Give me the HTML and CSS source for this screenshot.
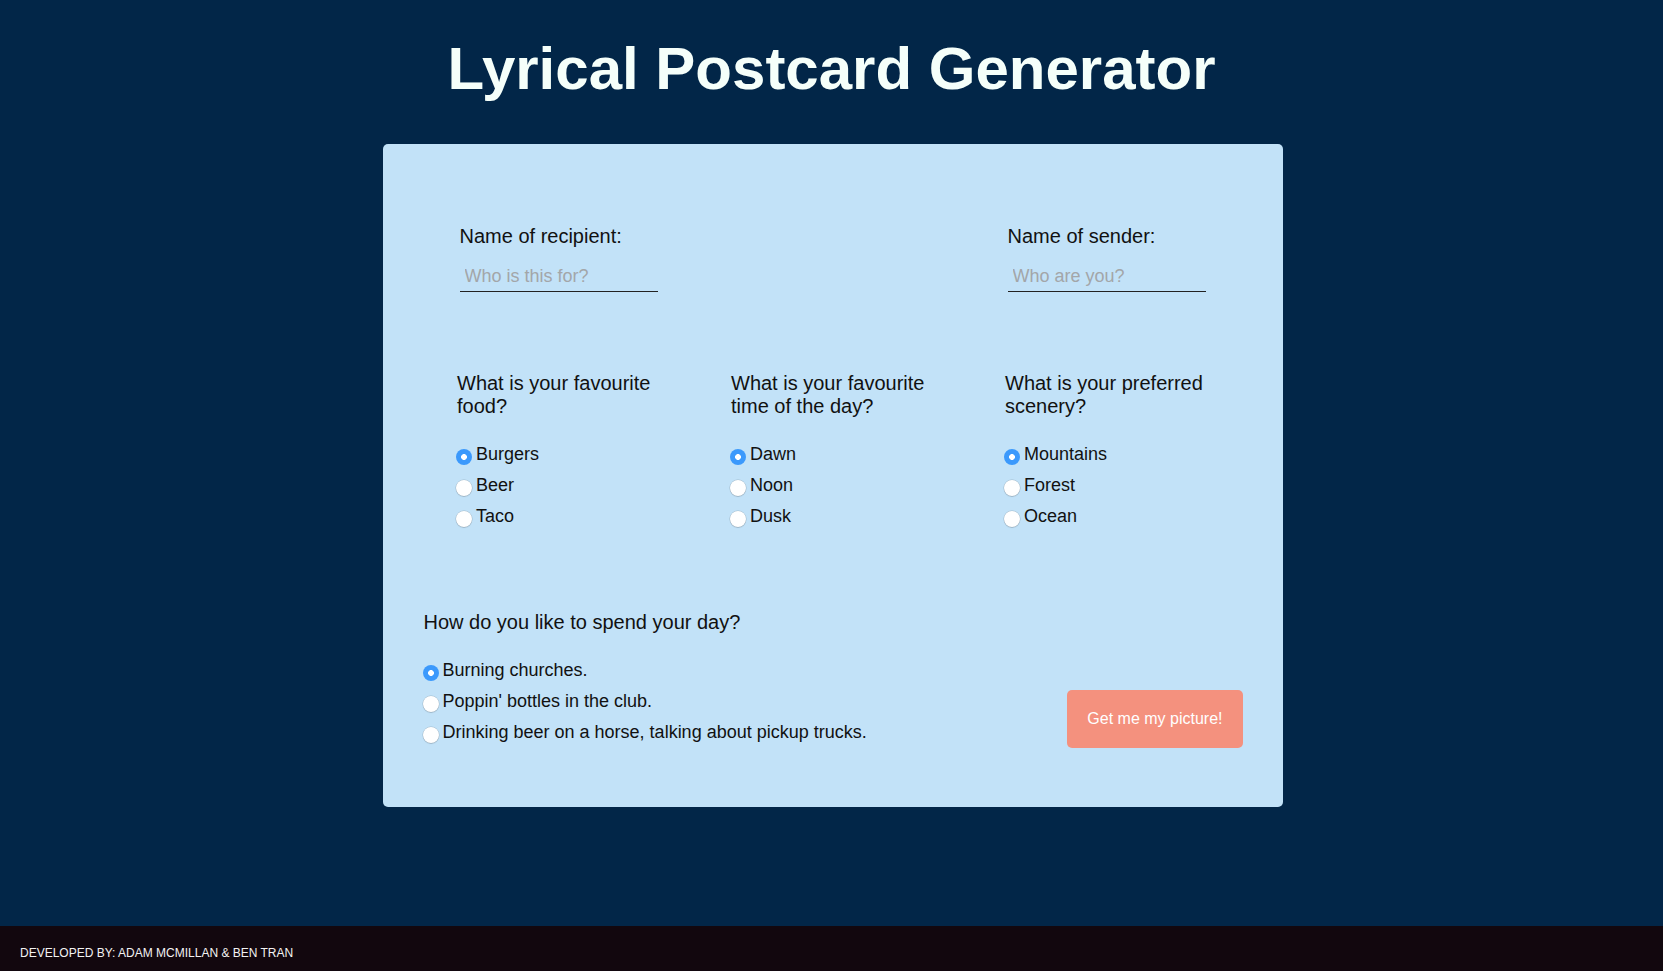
FILE: index.html
```html
<!DOCTYPE html>
<html lang="en">
<head>
<meta charset="utf-8">
<title>Lyrical Postcard Generator</title>
<link rel="stylesheet" href="styles.css">
</head>
<body>
<main class="main">
  <h1 class="title">Lyrical Postcard Generator</h1>
  <form class="card">
    <div class="names">
      <label class="name-field">
        <span class="field-label">Name of recipient:</span>
        <input class="text-input" type="text" placeholder="Who is this for?">
      </label>
      <label class="name-field">
        <span class="field-label">Name of sender:</span>
        <input class="text-input" type="text" placeholder="Who are you?">
      </label>
    </div>

    <div class="questions">
      <fieldset class="question">
        <p class="q-text">What is your favourite food?</p>
        <div class="options">
          <label class="option"><input class="radio" type="radio" name="food" checked>Burgers</label>
          <label class="option"><input class="radio" type="radio" name="food">Beer</label>
          <label class="option"><input class="radio" type="radio" name="food">Taco</label>
        </div>
      </fieldset>
      <fieldset class="question">
        <p class="q-text">What is your favourite time of the day?</p>
        <div class="options">
          <label class="option"><input class="radio" type="radio" name="time" checked>Dawn</label>
          <label class="option"><input class="radio" type="radio" name="time">Noon</label>
          <label class="option"><input class="radio" type="radio" name="time">Dusk</label>
        </div>
      </fieldset>
      <fieldset class="question">
        <p class="q-text">What is your preferred scenery?</p>
        <div class="options">
          <label class="option"><input class="radio" type="radio" name="scenery" checked>Mountains</label>
          <label class="option"><input class="radio" type="radio" name="scenery">Forest</label>
          <label class="option"><input class="radio" type="radio" name="scenery">Ocean</label>
        </div>
      </fieldset>
    </div>

    <div class="bottom">
      <fieldset class="question question-wide">
        <p class="q-text">How do you like to spend your day?</p>
        <div class="options">
          <label class="option"><input class="radio" type="radio" name="day" checked>Burning churches.</label>
          <label class="option"><input class="radio" type="radio" name="day">Poppin' bottles in the club.</label>
          <label class="option"><input class="radio" type="radio" name="day">Drinking beer on a horse, talking about pickup trucks.</label>
        </div>
      </fieldset>
      <button class="submit" type="button">Get me my picture!</button>
    </div>
  </form>
</main>
<footer class="footer">DEVELOPED BY: ADAM MCMILLAN &amp; BEN TRAN</footer>
</body>
</html>
```

FILE: styles.css
```css
* {
  box-sizing: border-box;
}

html, body {
  margin: 0;
  padding: 0;
}

body {
  min-height: 100vh;
  display: flex;
  flex-direction: column;
  background: #022648;
  font-family: "Liberation Sans", Arial, Helvetica, sans-serif;
  color: #111;
}

.main {
  flex: 1;
  display: flex;
  flex-direction: column;
  align-items: center;
}

.title {
  margin: 34px 0 41px;
  font-size: 60px;
  line-height: 69px;
  font-weight: 700;
  color: #f5fffa;
}

.card {
  width: 900px;
  margin-left: 2px;
  background: #c2e2f8;
  border-radius: 5px;
  padding: 81px 40px 59px;
  display: flex;
  flex-direction: column;
}

.names {
  display: flex;
  justify-content: space-between;
  padding: 0 37px 0 37px;
}

.name-field {
  width: 198px;
  display: flex;
  flex-direction: column;
  gap: 14px;
}

.field-label {
  font-size: 20px;
  line-height: 23px;
}

.text-input {
  width: 198px;
  font-family: inherit;
  font-size: 18px;
  line-height: 21px;
  padding: 4px 5px;
  border: 0;
  border-bottom: 1px solid #222;
  background: transparent;
  color: #111;
  outline: none;
}

.text-input::placeholder {
  color: #a3a6a9;
}

.questions {
  margin: 80px 0 0 -2px;
  display: flex;
  justify-content: space-around;
}

.question {
  width: 201px;
  margin: 0;
  padding: 0;
  border: 0;
  min-width: 0;
}

.q-text {
  margin: 0 0 21px;
  font-size: 20px;
  line-height: 23px;
}

.options {
  display: flex;
  flex-direction: column;
}

.option {
  display: flex;
  align-items: center;
  height: 31px;
  font-size: 18px;
  line-height: 31px;
  white-space: nowrap;
}

.radio {
  appearance: none;
  -webkit-appearance: none;
  width: 16px;
  height: 16px;
  margin: 5px 4px 0 -1px;
  border-radius: 50%;
  background: #fff;
  box-shadow: 0 0 0 0.5px rgba(0, 0, 0, 0.18), 0 1px 1px rgba(0, 0, 0, 0.12);
  flex: none;
}

.radio:checked {
  background: radial-gradient(circle, #fff 0 2.6px, #3b99fc 3.2px);
  box-shadow: none;
}

.bottom {
  margin-top: 79px;
  display: flex;
  justify-content: space-between;
  align-items: flex-end;
  padding-left: 1px;
}

.question-wide {
  width: auto;
}

.submit {
  font-family: inherit;
  font-size: 16px;
  line-height: 18px;
  padding: 20px;
  border: 0;
  border-radius: 5px;
  background: #f4917e;
  color: #fff;
  cursor: pointer;
}

.footer {
  height: 45px;
  background: #12070e;
  color: #f2f2f2;
  font-size: 12px;
  line-height: 14px;
  padding: 20px 20px 0;
}
```
